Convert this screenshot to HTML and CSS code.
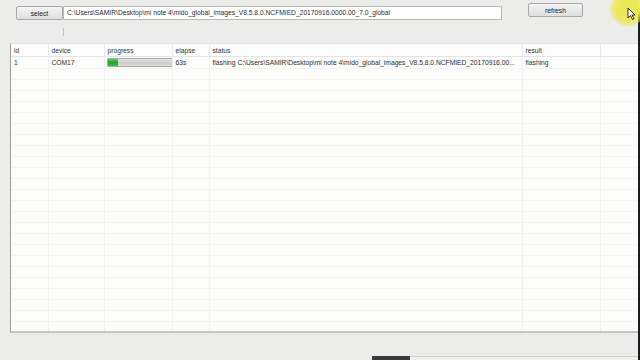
FILE: index.html
```html
<!DOCTYPE html>
<html lang="en">
<head>
  <meta charset="UTF-8" />
  <title>flash tool</title>
  <link rel="stylesheet" href="styles.css">
</head>
<body>
  <div class="window">
    <div class="toolbar">
      <button class="btn btn-select">select</button>
      <div class="path">C:\Users\SAMIR\Desktop\mi note 4\mido_global_images_V8.5.8.0.NCFMIED_20170916.0000.00_7.0_global</div>
      <button class="btn btn-refresh">refresh</button>
    </div>
    <div class="tick"></div>

    <div class="list">
      <table>
        <colgroup>
          <col class="c-id"><col class="c-device"><col class="c-progress"><col class="c-elapse"><col class="c-status"><col class="c-result"><col class="c-extra">
        </colgroup>
        <thead>
          <tr><th>id</th><th>device</th><th>progress</th><th>elapse</th><th>status</th><th>result</th><th></th></tr>
        </thead>
        <tbody id="rows">
          <tr>
            <td>1</td>
            <td>COM17</td>
            <td><div class="bar"><div class="fill"></div></div></td>
            <td>63s</td>
            <td class="status">flashing C:\Users\SAMIR\Desktop\mi note 4\mido_global_images_V8.5.8.0.NCFMIED_20170916.00...</td>
            <td>flashing</td>
            <td></td>
          </tr>
        </tbody>
      </table>
    </div>

    <div class="bottom">
      <div class="scroll"></div>
    </div>
  </div>

  <div class="cursor-glow"></div>
  <svg class="cursor" width="9" height="13" viewBox="0 0 9 13">
    <path d="M1 1 L1 11 L3.5 8.5 L5.5 12.5 L7 11.8 L5 8 L8 8 Z" fill="#fff" stroke="#000" stroke-width="0.8"/>
  </svg>
  <div class="edge"></div>

  <script>
    var body = document.getElementById('rows');
    for (var i = 0; i < 24; i++) {
      var tr = document.createElement('tr');
      tr.className = 'empty';
      for (var j = 0; j < 7; j++) tr.appendChild(document.createElement('td'));
      body.appendChild(tr);
    }
  </script>
</body>
</html>
```

FILE: styles.css
```css
html, body {
  margin: 0;
  padding: 0;
}
body {
  width: 640px;
  height: 360px;
  overflow: hidden;
  background: #ecedea;
  font-family: "Liberation Sans", Arial, sans-serif;
  font-size: 6.7px;
  color: #2e2e2e;
  position: relative;
}
.window {
  display: flex;
  flex-direction: column;
  height: 360px;
}
.toolbar {
  display: flex;
  align-items: flex-start;
  height: 28px;
  padding-left: 16px;
}
.btn {
  font-family: "Liberation Sans", Arial, sans-serif;
  font-size: 6.7px;
  color: #222;
  border: 1px solid #a9a9a9;
  border-radius: 2px;
  background: linear-gradient(#f4f4f4, #dedede);
  padding: 0;
}
.btn-select {
  width: 47px;
  height: 14px;
  margin-top: 6px;
}
.path {
  width: 434px;
  height: 12px;
  margin-top: 6px;
  background: #fff;
  border: 1px solid #b7b9b7;
  padding-left: 3px;
  line-height: 12px;
  white-space: nowrap;
  overflow: hidden;
}
.btn-refresh {
  width: 55px;
  height: 14px;
  margin-top: 3px;
  margin-left: 26px;
}
.tick {
  width: 1px;
  height: 8px;
  margin-left: 63px;
  background: #c2c2c2;
}
.list {
  margin: 7px 2px 0 10px;
  height: 287px;
  background: #fcfcfb;
  border-left: 1px solid #9c9c9c;
  border-top: 1px solid #e2e2e2;
  border-bottom: 2px solid #c4c4c2;
  overflow: hidden;
}
table {
  border-collapse: collapse;
  table-layout: fixed;
  width: 627px;
}
.c-id { width: 37px; }
.c-device { width: 56px; }
.c-progress { width: 68px; }
.c-elapse { width: 37px; }
.c-status { width: 313px; }
.c-result { width: 78px; }
.c-extra { width: 38px; }
th {
  font-weight: normal;
  text-align: left;
  height: 12px;
  padding: 0 0 0 3px;
  color: #333;
  border-right: 1px solid #e8e8e8;
  border-bottom: 1px solid #e4e4e4;
  background: #fdfdfd;
}
td {
  height: 10px;
  padding: 0 0 0 3px;
  border-right: 1px solid #f0f0ee;
  border-bottom: 1px solid #f3f3f1;
  white-space: nowrap;
  overflow: hidden;
}
tr:first-child td {
  height: 11px;
}
.bar {
  width: 64px;
  height: 7px;
  margin-left: -1px;
  border: 1px solid #aaa;
  border-radius: 1px;
  background: linear-gradient(#e6e6e6, #cfcfcf 50%, #dcdcdc);
}
.fill {
  width: 10px;
  height: 7px;
  background: linear-gradient(#5fd060, #1fa52a 50%, #3cbc3e);
}
.bottom {
  flex: 1;
  position: relative;
}
.scroll {
  position: absolute;
  left: 372px;
  right: 2px;
  bottom: 0;
  height: 3px;
  border-top: 1px solid #cfcfcf;
  background: #f0f0ee;
}
.scroll::before {
  content: "";
  position: absolute;
  left: 0;
  top: -1px;
  width: 38px;
  height: 4px;
  background: #3a3a3a;
}
.edge {
  position: absolute;
  right: 0;
  top: 12px;
  bottom: 0;
  width: 2px;
  background: #1c1c1c;
}
.cursor-glow {
  position: absolute;
  left: 610px;
  top: -8px;
  width: 36px;
  height: 34px;
  border-radius: 50%;
  background: radial-gradient(rgba(236, 232, 80, 0.95) 45%, rgba(236, 232, 80, 0.3) 75%, rgba(236, 232, 80, 0) 100%);
  z-index: 2;
}
.cursor {
  position: absolute;
  left: 627px;
  top: 7px;
  z-index: 3;
}
```
